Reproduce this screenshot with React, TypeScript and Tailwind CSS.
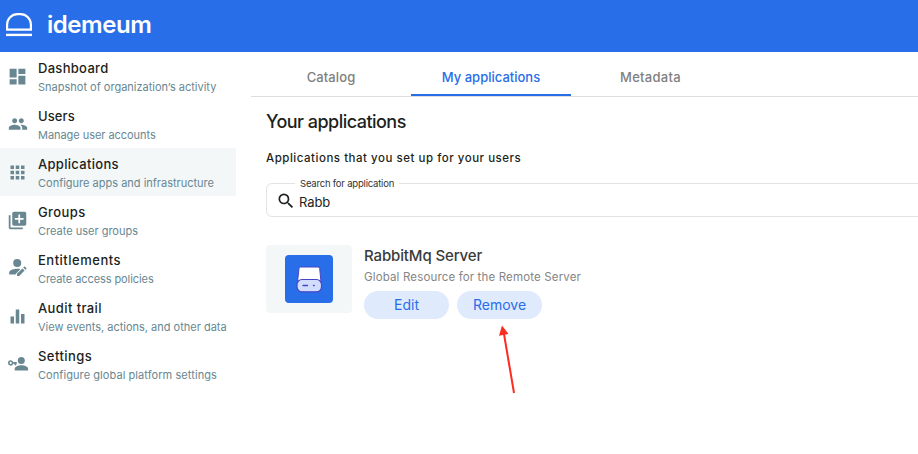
import type { ReactNode } from "react";
import { MdApps, MdDashboard, MdEqualizer, MdLibraryAdd, MdPeople, MdSearch } from "react-icons/md";

function PersonEdit() {
  return (
    <svg width="20" height="20" viewBox="0 0 20 20" fill="currentColor">
      <circle cx="9.2" cy="5" r="4" />
      <path d="M1.200 16.600v-1.800c0-1.200.5-2 1.600-2.600C4.700 11.200 7 10.700 9.200 10.700c1.200 0 2.300.1 3.300.4L7.300 16.600z" />
      <path d="M9 15.800v2.200h2.200l5.400-5.400-2.200-2.200zM15.200 9.600l.9-.9c.3-.3.7-.3 1 0l1.200 1.200c.3.3.3.7 0 1l-.9.9z" />
    </svg>
  );
}

function PersonKey() {
  return (
    <svg width="22" height="20" viewBox="0 0 22 20" fill="currentColor">
      <circle cx="14.300" cy="6.400" r="3.500" />
      <path d="M7.700 16.600v-1.700c0-2.400 3.700-3.700 6.700-3.700s6.700 1.300 6.700 3.700v1.700z" />
      <path fillRule="evenodd" d="M3.700 6.200a2.700 2.700 0 0 1 2.500 1.800H9.800V9.700H9.300V11.200H7.500V9.700H6.200a2.700 2.700 0 1 1-2.500-3.500zm0 1.600a1.100 1.100 0 1 0 0 2.200 1.100 1.100 0 0 0 0-2.200z" />
    </svg>
  );
}

type NavProps = { icon: ReactNode; title: string; text: string; titleClass: string; textClass: string; active?: boolean };

function NavItem({ icon, title, text, titleClass, textClass, active }: NavProps) {
  return (
    <a className={`flex h-12 w-[236px] items-center ${active ? "bg-[#f3f7f8]" : ""}`}>
      <span className="flex w-[38px] shrink-0 items-center justify-center pr-[3px] text-[#688791]">{icon}</span>
      <span className="flex flex-col whitespace-nowrap pt-1">
        <span className={`h-[18px] text-[13px] font-medium leading-[16px] text-[#1d1f20] ${titleClass}`}>{title}</span>
        <span className={`h-[18px] text-[11px] leading-[18px] text-[#688791] ${textClass}`}>{text}</span>
      </span>
    </a>
  );
}

export default function App() {
  return (
    <div className="h-[454px] w-[918px] overflow-hidden bg-white font-['Inter',sans-serif] whitespace-nowrap">
      <header className="flex h-[52px] items-center bg-[#286ee8] text-white">
        <svg className="ml-[5px] shrink-0" width="28" height="28" viewBox="0 0 28 28" fill="none" stroke="currentColor">
          <path d="M2.100 17.700V12.500a10.300 10.300 0 0 1 10.300-10.300h3.200A10.300 10.300 0 0 1 25.900 12.500v5.200z" strokeWidth="2.200" />
          <path d="M1 22.900h26" strokeWidth="2.400" />
        </svg>
        <span className="ml-[14px] pb-[2px] text-[24px] font-semibold leading-[30px] tracking-[-0.450px]">idemeum</span>
      </header>
      <div className="flex">
        <nav className="w-[251px] shrink-0">
          <NavItem icon={<MdDashboard size={21} />} title="Dashboard" text="Snapshot of organization’s activity" titleClass="tracking-[0.3px]" textClass="tracking-[0px]" />
          <NavItem icon={<MdPeople size={20} />} title="Users" text="Manage user accounts" titleClass="tracking-[0.1px]" textClass="tracking-[-0.05px]" />
          <NavItem icon={<MdApps size={21} />} title="Applications" text="Configure apps and infrastructure" titleClass="tracking-[0.3px]" textClass="tracking-[0px]" active />
          <NavItem icon={<MdLibraryAdd size={21} />} title="Groups" text="Create user groups" titleClass="tracking-[0.4px]" textClass="tracking-[0px]" />
          <NavItem icon={<PersonEdit />} title="Entitlements" text="Create access policies" titleClass="tracking-[0.5px]" textClass="tracking-[-0.08px]" />
          <NavItem icon={<MdEqualizer size={21} />} title="Audit trail" text="View events, actions, and other data" titleClass="tracking-[0.4px]" textClass="tracking-[0px]" />
          <NavItem icon={<PersonKey />} title="Settings" text="Configure global platform settings" titleClass="tracking-[0.450px]" textClass="tracking-[0.07px]" />
        </nav>
        <main className="min-w-0 flex-1">
          <div className="flex h-[45px] border-b border-[#dedede] text-[13px] font-medium leading-[51px] text-[#808080]">
            <div className="w-[160px] text-center tracking-[0.1px]">Catalog</div>
            <div className="h-[44px] w-[160px] border-b-2 border-[#286ee8] text-center text-[#286ee8]">My applications</div>
            <div className="w-[160px] pr-px text-center tracking-[0.3px]">Metadata</div>
          </div>
          <div className="pl-[15px]">
            <h1 className="mt-[13px] text-[18px] font-medium leading-[24px] tracking-[-0.530px] text-[#1d1f20]">Your applications</h1>
            <p className="mt-[16px] text-[11.500px] font-medium leading-[16px] tracking-[0.520px] text-[#1d1f20]">Applications that you set up for your users</p>
            <fieldset className="mr-[-8px] mt-[11px] h-[40px] rounded-[6px] border border-[#e3e3e3] pl-[9px]">
              <legend className="ml-[19px] h-[13px] px-[5px] text-[9.500px] leading-[13px] tracking-[-0.2px] text-[#333333]">Search for application</legend>
              <div className="flex h-[25px] items-center text-[#1d1f20]">
                <MdSearch className="mb-[3px]" size={20} />
                <span className="ml-[3px] text-[13px] tracking-[-0.1px]">Rabb</span>
              </div>
            </fieldset>
            <section className="mt-[28px] flex">
              <div className="flex h-[68px] w-[86px] items-center justify-center rounded-[4px] bg-[#f3f7f8]">
                <svg width="48" height="48" viewBox="0 0 48 48">
                  <rect width="48" height="48" rx="4" fill="#286ee8" />
                  <path d="M15.500 12h17.500q1.500 0 1.700 1.500L36 27H12.500l1.500-13.500Q14.200 12 15.500 12z" fill="white" stroke="#4545c8" strokeLinejoin="round" />
                  <rect x="12" y="24.500" width="24.500" height="12.300" rx="5" fill="#d2dcfc" stroke="#4545c8" strokeWidth="1.200" />
                  <path d="M18 30.500h4.500M28.500 30.500h.7" stroke="#4545c8" strokeWidth="1.300" strokeLinecap="round" />
                </svg>
              </div>
              <div className="ml-[12px]">
                <h2 className="text-[15px] font-medium leading-[22px] tracking-[-0.130px] text-[#393b3c]">RabbitMq Server</h2>
                <p className="text-[11.500px] leading-[20px] tracking-[0.150px] text-[#858585]">Global Resource for the Remote Server</p>
                <div className="mt-[4px] flex gap-2 text-[14px] leading-[28px] text-[#286ee8]">
                  <button className="h-7 w-[85px] rounded-full bg-[#e0eafd]">Edit</button>
                  <button className="h-7 w-[85px] rounded-full bg-[#e0eafd]">Remove</button>
                </div>
              </div>
            </section>
            <svg className="ml-[232px] mt-[6px]" width="20" height="70" viewBox="498 325 20 70">
              <path d="M504 334L514 393" stroke="#fb2c20" strokeWidth="2" />
              <path d="M502 325.500L499 335.700L508.500 334z" fill="#fb2c20" />
            </svg>
          </div>
        </main>
      </div>
    </div>
  );
}
